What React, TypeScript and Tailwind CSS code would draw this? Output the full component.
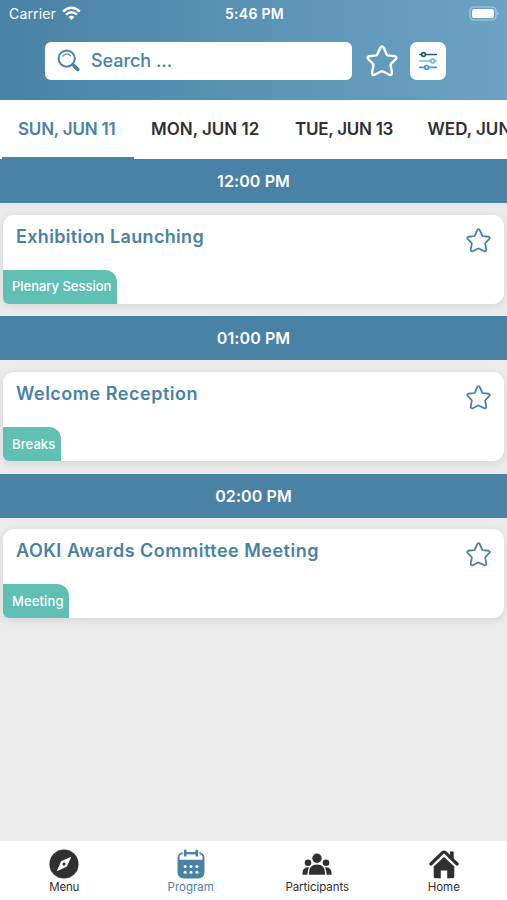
import { useState } from "react";
import clsx from "clsx";

const days = [
  { label: "SUN, JUN 11", className: "w-[98px] tracking-[-0.2px]" },
  { label: "MON, JUN 12", className: "w-[109px] tracking-[0px]" },
  { label: "TUE, JUN 13", className: "w-[97.5px] tracking-[-0.25px]" },
  { label: "WED, JUN 14", className: "w-[109px] tracking-[0px]" },
];

const sessions = [
  { time: "12:00 PM", title: "Exhibition Launching", tag: "Plenary Session", titleClass: "tracking-[0.33px]", tagClass: "w-[114px] tracking-[-0.02px]" },
  { time: "01:00 PM", title: "Welcome Reception", tag: "Breaks", titleClass: "tracking-[0.52px]", tagClass: "w-[57.5px] tracking-[0.1px]" },
  { time: "02:00 PM", title: "AOKI Awards Committee Meeting", tag: "Meeting", titleClass: "tracking-[0.5px]", tagClass: "w-[66px] tracking-[0.12px]" },
];

const navItems = [
  { label: "Menu", Icon: CompassIcon, labelClass: "tracking-[-0.2px]" },
  { label: "Program", Icon: CalendarIcon, labelClass: "tracking-[0px]" },
  { label: "Participants", Icon: PeopleIcon, labelClass: "tracking-[-0.05px]" },
  { label: "Home", Icon: HomeIcon, labelClass: "tracking-[0px]" },
];

function StarIcon({ className, strokeWidth }: { className: string; strokeWidth: number }) {
  return (
    <svg viewBox="0 0 32 32" className={className} fill="none" stroke="currentColor" strokeWidth={strokeWidth} strokeLinejoin="round" aria-hidden="true">
      <path d="M14.4 2.6Q16 .4 17.6 2.6L20.6 9.3Q21 10.2 22 10.4L28.9 11.2Q31.3 11.8 29.9 14L25 18.9Q24.4 19.6 24.6 20.5L26 27.6Q26 30.4 23.4 29.8L17 26.5Q16 26 15 26.5L8.6 29.8Q6 30.4 6 27.6L7.4 20.5Q7.6 19.6 7 18.9L2.1 14Q.7 11.8 3.1 11.2L10 10.4Q11 10.2 11.4 9.3Z" />
    </svg>
  );
}

function WifiIcon() {
  return (
    <svg viewBox="0 0 20 15" className="ml-1.5 h-[15px] w-[19px]" fill="none" stroke="currentColor" strokeWidth="2.5" aria-hidden="true">
      <path d="M1.2 5.4Q10-2.4 18.8 5.4" />
      <path d="M4.3 8.8Q10 3.7 15.7 8.8" />
      <path d="M6.9 11.2Q10 8.3 13.1 11.2L10 14.4Z" fill="currentColor" stroke="none" />
    </svg>
  );
}

function BatteryIcon() {
  return (
    <svg viewBox="0 0 31 15" className="h-[15px] w-[31px]" aria-hidden="true">
      <rect x="1" y="1" width="26" height="13" rx="4" fill="none" stroke="white" strokeOpacity=".45" strokeWidth="1.2" />
      <rect x="3" y="3" width="22" height="9" rx="2" fill="white" />
      <path d="M28.5 5.5Q31 7.5 28.5 9.5Z" fill="white" fillOpacity=".5" />
    </svg>
  );
}

function SearchIcon() {
  return (
    <svg viewBox="0 0 24 24" className="h-6 w-6" fill="none" stroke="currentColor" strokeLinecap="round" aria-hidden="true">
      <circle cx="9.7" cy="9.6" r="8.1" strokeWidth="2" />
      <path d="M5.9 7.2Q9.5 2.9 13.5 6.9" strokeWidth="1.2" />
      <path d="M15.6 15.4L17 16.8" strokeWidth="2.2" />
      <path d="M17.1 16.9L20.8 20.5" strokeWidth="3.7" />
    </svg>
  );
}

function FilterIcon() {
  return (
    <svg viewBox="0 0 20 20" className="h-5 w-5" fill="none" strokeWidth="1.6" strokeLinecap="round" aria-hidden="true">
      <g stroke="#245b70">
        <path d="M1.8 3.5H3.5M7.6 3.5H18.3" />
        <circle cx="5.6" cy="3.5" r="1.9" />
      </g>
      <g stroke="#69bfba">
        <path d="M1.8 10H12.6M16.6 10H18.3" />
        <circle cx="14.6" cy="10" r="1.9" />
      </g>
      <g stroke="#3299d4">
        <path d="M1.8 16.4H6.5M10.6 16.4H18.3" />
        <circle cx="8.6" cy="16.4" r="1.9" />
      </g>
    </svg>
  );
}

function CompassIcon() {
  return (
    <svg viewBox="0 0 30 30" className="h-[30px] w-[30px]" aria-hidden="true">
      <circle cx="15" cy="15" r="14.6" fill="currentColor" />
      <path d="M22.3 7.7L17.9 17.6L7.8 22.2L12.1 12.3Z" fill="white" />
      <circle cx="15" cy="15" r="1.6" fill="currentColor" />
    </svg>
  );
}

function CalendarIcon() {
  return (
    <svg viewBox="0 0 30 30" className="h-[30px] w-[30px]" aria-hidden="true">
      <rect x="1.5" y="3" width="27" height="26.5" rx="6" fill="currentColor" />
      <path d="M3.5 10.8V8.2Q3.5 5.2 6.5 5.2H23.5Q26.5 5.2 26.5 8.2V10.8Z" fill="white" />
      <path d="M9.2 1.8V6.3M20.8 1.8V6.3" stroke="white" strokeWidth="5.2" />
      <path d="M9.2 4.1H20.8" stroke="currentColor" strokeWidth="2.2" />
      <path d="M9.2 1.8V6.3M20.8 1.8V6.3" stroke="currentColor" strokeWidth="2.8" strokeLinecap="round" />
      <g fill="white">
        <circle cx="9.1" cy="17.4" r="1.5" />
        <circle cx="15" cy="17.4" r="1.5" />
        <circle cx="20.9" cy="17.4" r="1.5" />
        <circle cx="9.1" cy="23.2" r="1.5" />
        <circle cx="15" cy="23.2" r="1.5" />
        <circle cx="20.9" cy="23.2" r="1.5" />
      </g>
    </svg>
  );
}

function PeopleIcon() {
  return (
    <svg viewBox="0 0 30 30" className="h-[30px] w-[30px]" fill="currentColor" aria-hidden="true">
      <circle cx="15" cy="9.3" r="4.7" />
      <circle cx="6" cy="13.7" r="3.3" />
      <circle cx="24" cy="13.7" r="3.3" />
      <path d="M7 25.8V23.5Q7.4 15.6 15 15.6Q22.6 15.6 23 23.5V25.8Z" />
      <path d="M.5 25.8V24Q.6 17.8 7.4 18.3Q5.6 20.5 5.5 25.8Z" />
      <path d="M29.5 25.8V24Q29.4 17.8 22.6 18.3Q24.4 20.5 24.5 25.8Z" />
    </svg>
  );
}

function HomeIcon() {
  return (
    <svg viewBox="0 0 30 30" className="h-[30px] w-[30px]" aria-hidden="true">
      <path d="M21.5 2.9H24.2V10L21.5 7.3Z" fill="currentColor" stroke="currentColor" strokeLinejoin="round" />
      <path d="M1.9 15L13.6 3.7Q15 2.4 16.4 3.7L28.1 15" fill="none" stroke="currentColor" strokeWidth="3.2" strokeLinecap="round" strokeLinejoin="round" />
      <path d="M15 7.9L25.3 17.6V27.5Q25.3 29.3 23.5 29.3H18.2V21.5H11.8V29.3H6.5Q4.7 29.3 4.7 27.5V17.6Z" fill="currentColor" />
    </svg>
  );
}

function Header() {
  return (
    <header className="h-[100px] shrink-0 bg-linear-to-r from-[#4982a5] to-[#6ca3c5] text-white">
      <div className="grid h-[26px] grid-cols-3 items-center pr-[7px] pl-[9px] font-['Inter'] text-[14px]">
        <div className="flex items-center tracking-[0.15px]">
          Carrier
          <WifiIcon />
        </div>
        <span className="text-center font-semibold tracking-[0.3px]">5:46 PM</span>
        <div className="flex justify-end">
          <BatteryIcon />
        </div>
      </div>
      <div className="flex items-center pt-4 pl-[45px]">
        <label className="flex h-[38px] w-[307px] items-center gap-2.5 rounded-md bg-white pl-3 text-[#4982a5]">
          <SearchIcon />
          <input
            type="text"
            placeholder="Search ..."
            className="w-60 pb-0.5 text-[18px] font-medium tracking-[-0.05px] outline-none placeholder:text-[#4982a5]"
          />
        </label>
        <button type="button" aria-label="Favourites" className="ml-[14px]">
          <StarIcon className="h-8 w-8" strokeWidth={2.4} />
        </button>
        <button type="button" aria-label="Filters" className="ml-3 grid h-[38px] w-9 place-items-center rounded-[7px] bg-white">
          <FilterIcon />
        </button>
      </div>
    </header>
  );
}

export default function App() {
  const [activeDay, setActiveDay] = useState(0);
  const [activeNav, setActiveNav] = useState(1);

  return (
    <div className="flex h-[900px] w-[507px] flex-col overflow-hidden bg-[#ebebeb] font-['Inter',sans-serif]">
      <Header />
      <div className="flex h-[59px] shrink-0 overflow-hidden bg-white pl-0.5">
        {days.map((day, index) => (
          <button
            key={day.label}
            type="button"
            onClick={() => setActiveDay(index)}
            className={clsx(
              "mr-px flex h-[59px] shrink-0 items-center border-b-2 pt-[3px] pr-[18px] pl-4 text-left text-[17px] font-semibold whitespace-nowrap",
              index === activeDay ? "border-[#4982a5] text-[#4982a5]" : "border-transparent text-[#303030]",
            )}
          >
            <span className={day.className}>{day.label}</span>
          </button>
        ))}
      </div>
      <main className="flex-1">
        {sessions.map((session) => (
          <section key={session.time} className="mb-[12.9px]">
            <h2 className="flex h-[44px] items-center justify-center bg-[#4982a5] text-[16px] font-semibold tracking-[0.1px] text-white">
              {session.time}
            </h2>
            <article className="mx-[3px] mt-[11.5px] flex h-[89px] flex-col justify-between overflow-hidden rounded-[11px] rounded-bl-md bg-white text-[#4982a5] shadow-[0_2px_8px_rgba(0,0,0,0.1)]">
              <div className="flex items-start justify-between px-[13px]">
                <h3 className={clsx("pt-2 text-[18px] leading-[27px] font-semibold", session.titleClass)}>{session.title}</h3>
                <button type="button" aria-label="Add to favourites" className="mt-[13px]">
                  <StarIcon className="h-[25px] w-[25px]" strokeWidth={2.3} />
                </button>
              </div>
              <span className={clsx("flex h-[34px] items-center self-start rounded-tr-[12px] bg-[#60c0b3] pt-px pl-[9px] text-[13px] font-medium whitespace-nowrap text-white", session.tagClass)}>
                {session.tag}
              </span>
            </article>
          </section>
        ))}
      </main>
      <nav className="grid h-[59px] shrink-0 grid-cols-4 bg-white pl-px">
        {navItems.map(({ label, Icon, labelClass }, index) => (
          <button
            key={label}
            type="button"
            onClick={() => setActiveNav(index)}
            className={clsx("flex flex-col items-center pt-2 text-[11.5px]", index === activeNav ? "text-[#4982a5]" : "text-[#303030]")}
          >
            <Icon />
            <span className={clsx("leading-4", labelClass)}>{label}</span>
          </button>
        ))}
      </nav>
    </div>
  );
}
